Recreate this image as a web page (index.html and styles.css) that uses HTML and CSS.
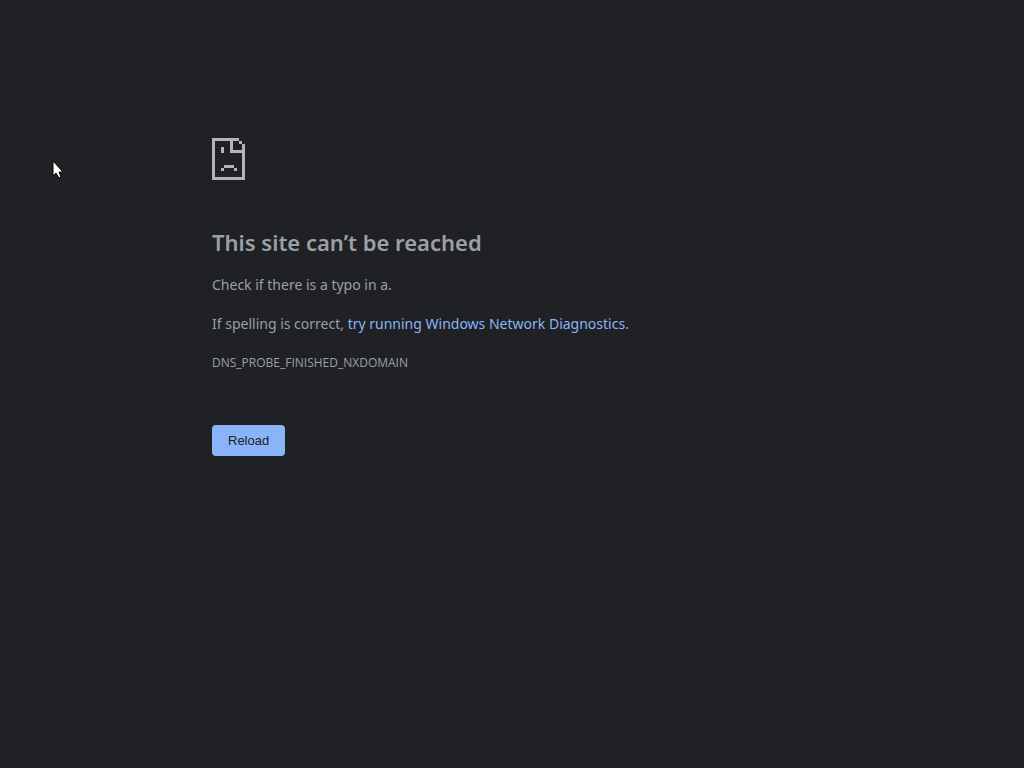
FILE: index.html
```html
<!DOCTYPE html>
<html lang="en">
<head>
    <meta charset="UTF-8">
    <meta name="viewport" content="width=device-width, initial-scale=1.0">
    <title>This site can’t be reached</title>
    <link rel="stylesheet" href="styles.css">
</head>
<body>
    <main class="error-page">
        <svg class="error-icon" viewBox="0 0 33 42" shape-rendering="crispEdges" aria-hidden="true">
            <!-- page outline with the folded corner -->
            <path d="M0 0H27V3H3V39H30V15H18V3H21V12H30V6H33V42H0Z"/>
            <path d="M27 3H30V6H27Z"/>
            <!-- eye and mouth -->
            <path d="M9 9H12V15H9Z"/>
            <path d="M12 27H22V30H12ZM9 30H12V33H9ZM22 30H25V33H22Z"/>
        </svg>
        <h1>This site can’t be reached</h1>
        <p>Check if there is a typo in a.</p>
        <p>If spelling is correct, <a href="#diagnostics">try running Windows Network Diagnostics.</a></p>
        <p class="error-code">DNS_PROBE_FINISHED_NXDOMAIN</p>
        <button class="reload-button" type="button" onclick="location.reload()">Reload</button>
    </main>

    <svg class="cursor" viewBox="0 0 12 19" aria-hidden="true">
        <path d="M1 1V16L4 13L7 18L9 17L7 12H11Z"/>
    </svg>
</body>
</html>
```

FILE: styles.css
```css
body {
    margin: 0;
    background-color: #202124;
    color: #9aa0a6;
    font-family: "Segoe UI", "Noto Sans", sans-serif;
    font-size: 14px;
    line-height: 24px;
}
.error-page {
    max-width: 600px;
    margin: 0 auto;
    padding: 138px 24px 40px;
}
.error-icon {
    display: block;
    width: 33px;
    height: 42px;
    fill: #b4b4b4;
}
h1 {
    margin: 47px 0 16px;
    font-size: 22px;
    font-weight: 600;
    line-height: 30px;
}
p {
    margin: 0 0 15px;
}
a {
    color: #8ab4f8;
    text-decoration: none;
}
.error-code {
    margin-bottom: 50px;
    font-family: "Segoe UI", "Open Sans", sans-serif;
    font-size: 12px;
}
.reload-button {
    padding: 8px 16px;
    border: 0;
    border-radius: 4px;
    background-color: #8ab4f8;
    color: #202124;
    font-family: "Liberation Sans", Arial, sans-serif;
    font-size: 13px;
    line-height: 15px;
    cursor: pointer;
}
/* mouse pointer lying over the page */
.cursor {
    position: absolute;
    top: 160px;
    left: 52px;
    width: 12px;
    height: 19px;
    fill: #fff;
    stroke: #000;
    stroke-width: 1;
}
```
